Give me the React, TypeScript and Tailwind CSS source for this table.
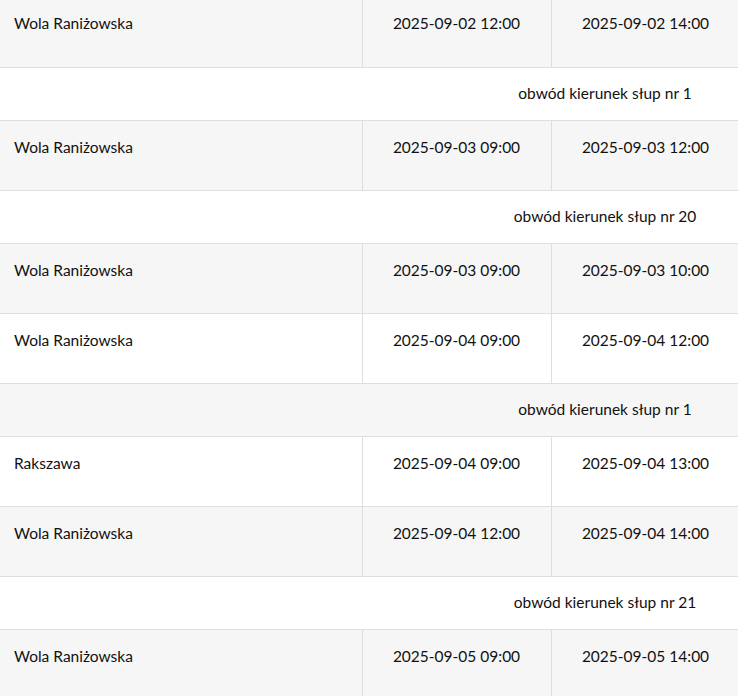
type Row =
  | { kind: "data"; place: string; from: string; to: string }
  | { kind: "group"; label: string };

const rows: Row[] = [
  { kind: "data", place: "Wola Raniżowska", from: "2025-09-02 12:00", to: "2025-09-02 14:00" },
  { kind: "group", label: "obwód kierunek słup nr 1" },
  { kind: "data", place: "Wola Raniżowska", from: "2025-09-03 09:00", to: "2025-09-03 12:00" },
  { kind: "group", label: "obwód kierunek słup nr 20" },
  { kind: "data", place: "Wola Raniżowska", from: "2025-09-03 09:00", to: "2025-09-03 10:00" },
  { kind: "data", place: "Wola Raniżowska", from: "2025-09-04 09:00", to: "2025-09-04 12:00" },
  { kind: "group", label: "obwód kierunek słup nr 1" },
  { kind: "data", place: "Rakszawa", from: "2025-09-04 09:00", to: "2025-09-04 13:00" },
  { kind: "data", place: "Wola Raniżowska", from: "2025-09-04 12:00", to: "2025-09-04 14:00" },
  { kind: "group", label: "obwód kierunek słup nr 21" },
  { kind: "data", place: "Wola Raniżowska", from: "2025-09-05 09:00", to: "2025-09-05 14:00" },
];

export default function App() {
  return (
    <div className="w-[738px] h-[696px] overflow-hidden bg-white text-[#111] font-['Lato','Open_Sans',sans-serif] text-[15.5px]">
      <table className="w-[1210px] -mt-[3px] border-collapse table-fixed">
        <colgroup>
          <col className="w-[362px]" />
          <col className="w-[189px]" />
          <col className="w-[189px]" />
          <col />
        </colgroup>
        <tbody>
          {rows.map((row, i) => {
            const bg = i % 2 === 0 ? "bg-[#f6f6f6]" : "bg-white";
            if (row.kind === "group") {
              return (
                <tr key={i} className={`${bg} border-b border-[#dedede]`}>
                  <td colSpan={4} className="h-[53px] text-center align-middle">
                    {row.label}
                  </td>
                </tr>
              );
            }
            return (
              <tr key={i} className={`${bg} border-b border-[#dedede]`}>
                <td className="h-[70px] align-top pl-[14px] pt-[14px] leading-6">{row.place}</td>
                <td className="align-top pt-[14px] leading-6 text-center border-l border-[#dedede]">{row.from}</td>
                <td className="align-top pt-[14px] leading-6 text-center border-l border-[#dedede]">{row.to}</td>
                <td className="align-top pt-[14px] leading-6 border-l border-[#dedede]"></td>
              </tr>
            );
          })}
        </tbody>
      </table>
    </div>
  );
}
